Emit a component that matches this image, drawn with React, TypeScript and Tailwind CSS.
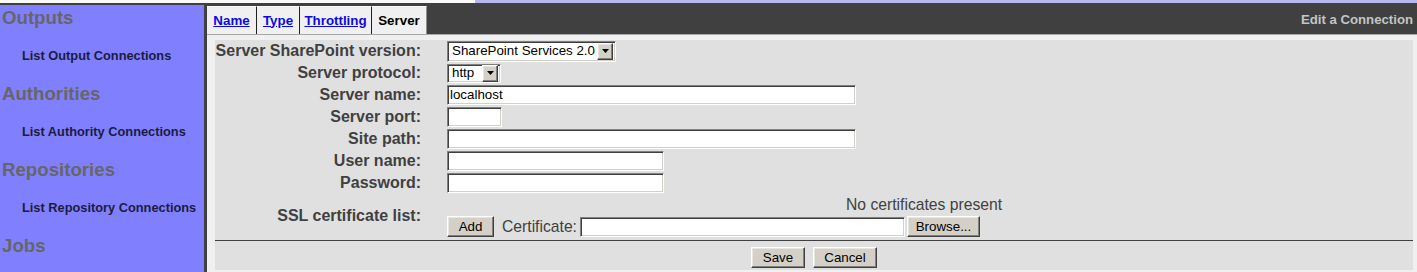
import React from "react";

const inset =
  "bg-white border border-t-[#808080] border-l-[#808080] border-r-white border-b-white shadow-[inset_1px_1px_0_#404040,inset_-1px_-1px_0_#d4d0c8]";
const raised =
  "bg-[#d4d0c8] border border-t-white border-l-white border-r-[#404040] border-b-[#404040] shadow-[inset_-1px_-1px_0_#808080,inset_1px_1px_0_#e8e6e0]";

function Arrow() {
  return (
    <div className={`${raised} w-[16px] h-[17px] flex items-center justify-center shrink-0`}>
      <svg width="7" height="4" viewBox="0 0 7 4">
        <polygon points="0,0 7,0 3.5,4" fill="#000" />
      </svg>
    </div>
  );
}

function Select({ value, w, h }: { value: string; w: string; h: string }) {
  return (
    <div className={`${inset} ${w} ${h} flex items-center justify-between pl-[4px] pr-[2px] text-[13.33px] text-black`}>
      <span className="leading-none">{value}</span>
      <Arrow />
    </div>
  );
}

function Input({ w, value }: { w: string; value?: string }) {
  return (
    <div className={`${inset} ${w} h-[20px] flex items-center pl-[2px] text-[13.33px] text-black`}>
      {value}
    </div>
  );
}

function Button({ label, w }: { label: string; w: string }) {
  return (
    <div className={`${raised} ${w} h-[21px] flex items-center justify-center text-[13.33px] text-black`}>
      {label}
    </div>
  );
}

function Row({ label, children, h = "h-[22px]" }: { label: string; children: React.ReactNode; h?: string }) {
  return (
    <div className={`flex ${h} items-center`}>
      <div className="w-[232px] pr-[26px] text-right font-bold text-[16px] text-[#404040] leading-none">
        {label}
      </div>
      {children}
    </div>
  );
}

export default function App() {
  const tabs = [
    { label: "Name", w: "w-[50px]", link: true },
    { label: "Type", w: "w-[43px]", link: true },
    { label: "Throttling", w: "w-[72px]", link: true },
    { label: "Server", w: "w-[55px]", link: false },
  ];
  const side = [
    { t: "Outputs", h: true },
    { t: "List Output Connections", h: false },
    { t: "Authorities", h: true },
    { t: "List Authority Connections", h: false },
    { t: "Repositories", h: true },
    { t: "List Repository Connections", h: false },
    { t: "Jobs", h: true },
  ];
  return (
    <div className="w-[1417px] h-[272px] overflow-hidden bg-[#404040] flex flex-col font-['Liberation_Sans',Arial,sans-serif]">
      <div className="h-[3px] flex shrink-0">
        <div className="w-[475px] bg-[#fafafa]" />
        <div className="flex-1 bg-[#b8b8f0]" />
      </div>
      <div className="flex flex-1 min-h-0">
        <div className="w-[204px] mt-[2px] bg-[#8080ff] overflow-hidden shrink-0">
          <div className="-mt-[6px]">
            {side.map((s) =>
              s.h ? (
                <div key={s.t} className="h-[38px] flex items-center pl-[2px] font-bold text-[18.67px] text-[#666666]">
                  {s.t}
                </div>
              ) : (
                <div key={s.t} className="h-[38px] flex items-center pl-[22px] font-bold text-[12.8px] text-[#1c1c3c]">
                  {s.t}
                </div>
              )
            )}
          </div>
        </div>
        <div className="ml-[3px] flex-1 flex flex-col min-w-0">
          <div className="h-[31px] flex items-end justify-between shrink-0">
            <div className="flex items-end">
              {tabs.map((t) => (
                <div
                  key={t.label}
                  className={`${t.w} h-[28px] flex items-center justify-center bg-[#f0f0f0] border-t border-t-[#f8f8f8] border-r ${
                    t.link ? "border-r-[#202020]" : "border-r-[#909090]"
                  } text-[13.33px] font-bold`}
                >
                  {t.link ? (
                    <span className="text-[#0a0ae6] underline">{t.label}</span>
                  ) : (
                    <span className="text-black">{t.label}</span>
                  )}
                </div>
              ))}
            </div>
            <div className="self-center pt-[2px] pr-[4px] text-[13.2px] font-bold text-[#c4c4c4]">
              Edit a Connection
            </div>
          </div>
          <div className="h-px bg-[#a8a8a8] shrink-0" />
          <div className="flex-1 bg-[#f0f0f0] pl-[8px] pr-[4px] pt-[5px] pb-[2px] min-h-0">
            <div className="h-full bg-[#e0e0e0] flex flex-col">
              <Row label="Server SharePoint version:">
                <Select value="SharePoint Services 2.0" w="w-[169px]" h="h-[21px]" />
              </Row>
              <Row label="Server protocol:">
                <Select value="http" w="w-[54px]" h="h-[19px]" />
              </Row>
              <Row label="Server name:">
                <Input w="w-[409px]" value="localhost" />
              </Row>
              <Row label="Server port:">
                <Input w="w-[55px]" />
              </Row>
              <Row label="Site path:">
                <Input w="w-[409px]" />
              </Row>
              <Row label="User name:">
                <Input w="w-[217px]" />
              </Row>
              <Row label="Password:">
                <Input w="w-[217px]" />
              </Row>
              <Row label="SSL certificate list:" h="h-[44px]">
                <div className="flex flex-col">
                  <div className="h-[22px] flex items-center pl-[399px] text-[15.7px] text-[#404040]">
                    No certificates present
                  </div>
                  <div className="h-[22px] flex items-start">
                    <Button label="Add" w="w-[47px]" />
                    <span className="ml-[8px] mr-[3px] mt-[1px] text-[15.7px] text-[#404040] leading-[20px]">
                      Certificate:
                    </span>
                    <div className="mt-[1px]">
                      <Input w="w-[325px]" />
                    </div>
                    <div className="ml-[2px]">
                      <Button label="Browse..." w="w-[73px]" />
                    </div>
                  </div>
                </div>
              </Row>
              <div className="h-px bg-[#404040] mt-[2px]" />
              <div className="flex justify-center gap-[8px] pt-[6px]">
                <Button label="Save" w="w-[54px]" />
                <Button label="Cancel" w="w-[64px]" />
              </div>
            </div>
          </div>
        </div>
      </div>
    </div>
  );
}
